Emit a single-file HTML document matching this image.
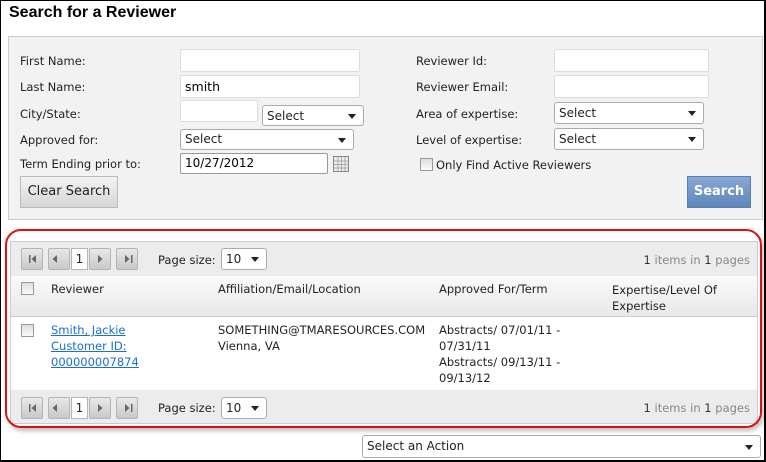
<!DOCTYPE html>
<html><head><style>
*{box-sizing:border-box;margin:0;padding:0}
body{width:766px;height:462px;background:#fff;font-family:"DejaVu Sans",Verdana,sans-serif;font-size:11.5px;color:#222;position:relative;overflow:hidden}
.a{position:absolute}
.frame{left:0;top:0;width:766px;height:462px;border:1px solid #000;border-right-width:2px;border-bottom-width:2px}
h1{position:absolute;left:9px;top:4px;font:bold 16px "Liberation Sans",Arial,sans-serif;color:#000}
.panel{left:8px;top:36px;width:755px;height:184px;background:#f2f2f2;border:1px solid #ccc}
.lbl{position:absolute;line-height:14px;white-space:nowrap}
.inp{position:absolute;background:#fff;border:1px solid #ddd;border-radius:2px;padding-left:4px;font-size:12.5px;color:#000}
.sel{position:absolute;background:#fff;border:1px solid #aaa;border-radius:3px;padding-left:4px;font-size:12px;color:#222}
.sel:after{content:"";position:absolute;right:7px;top:50%;margin-top:-2px;border-left:4px solid transparent;border-right:4px solid transparent;border-top:5px solid #222}
.btn{position:absolute;border:1px solid #bbb;background:linear-gradient(#f4f4f4,#d6d6d6);font-size:13px;text-align:center}
.pbtn{position:absolute;width:22px;height:22px;border:1px solid #b5b5b5;border-radius:2px;background:linear-gradient(#e8e8e8,#c8c8c8)}
.cb{position:absolute;width:13px;height:13px;border:1px solid #999;background:linear-gradient(#ddd,#fafafa)}
.lnk{color:#1a6ed8;text-decoration:underline}
</style></head><body>
<div class="a frame"></div>
<h1>Search for a Reviewer</h1>
<div class="a panel"></div>
<div class="lbl" style="left:20px;top:54px">First Name:</div>
<div class="lbl" style="left:20px;top:80px">Last Name:</div>
<div class="lbl" style="left:20px;top:107px">City/State:</div>
<div class="lbl" style="left:20px;top:133px">Approved for:</div>
<div class="lbl" style="left:20px;top:157px">Term Ending prior to:</div>
<div class="inp" style="left:180px;top:49px;width:180px;height:23px"></div>
<div class="inp" style="left:180px;top:75px;width:180px;height:23px;line-height:21px">smith</div>
<div class="inp" style="left:180px;top:100px;width:78px;height:22px"></div>
<div class="sel" style="left:262px;top:105px;width:102px;height:21px;line-height:20px">Select</div>
<div class="sel" style="left:180px;top:129px;width:174px;height:21px;line-height:19px">Select</div>
<div class="inp" style="left:180px;top:153px;width:148px;height:21px;line-height:19px;border-color:#999;font-size:12px">10/27/2012</div>
<svg class="a" style="left:333px;top:156px" width="16" height="16"><rect x="0.5" y="0.5" width="15" height="15" fill="#eee" stroke="#888"/><path d="M1 5H15M1 8.5H15M1 12H15M5 1V15M8.5 1V15M12 1V15" stroke="#aaa"/></svg>
<div class="btn" style="left:20px;top:176px;width:98px;height:32px;line-height:30px">Clear Search</div>
<div class="lbl" style="left:416px;top:54px">Reviewer Id:</div>
<div class="lbl" style="left:416px;top:80px">Reviewer Email:</div>
<div class="lbl" style="left:416px;top:107px">Area of expertise:</div>
<div class="lbl" style="left:416px;top:133px">Level of expertise:</div>
<div class="inp" style="left:554px;top:49px;width:155px;height:23px"></div>
<div class="inp" style="left:554px;top:75px;width:155px;height:23px"></div>
<div class="sel" style="left:554px;top:102px;width:150px;height:22px;line-height:20px">Select</div>
<div class="sel" style="left:554px;top:128px;width:150px;height:22px;line-height:20px">Select</div>
<div class="cb" style="left:420px;top:158px"></div>
<div class="lbl" style="left:436px;top:158px">Only Find Active Reviewers</div>
<div class="a" style="left:687px;top:176px;width:64px;height:32px;background:linear-gradient(#86a8d6,#5f86bb);border:1px solid #5a7fb0;color:#fff;font-weight:bold;font-size:13px;text-align:center;line-height:30px">Search</div>

<div class="a" style="left:10px;top:241px;width:748px;height:183px;border:1px solid #ccc;background:#fff"></div>
<div class="a" style="left:11px;top:242px;width:746px;height:34px;background:#ececec"></div>
<div class="a" style="left:11px;top:276px;width:746px;height:41px;background:linear-gradient(#fafafa,#e8e8e8);border-bottom:1px solid #ccc"></div>
<div class="a" style="left:11px;top:390px;width:746px;height:33px;background:#ececec"></div>

<div class="pbtn" style="left:21px;top:248px"></div><div class="pbtn" style="left:48px;top:248px"></div>
<div class="a" style="left:71px;top:248px;width:17px;height:22px;background:#fff;border:1px solid #b5b5b5;text-align:center;line-height:20px;font-size:12px">1</div>
<div class="pbtn" style="left:89px;top:248px"></div><div class="pbtn" style="left:116px;top:248px"></div>
<svg class="a" style="left:21px;top:248px" width="120" height="22"><g fill="#666"><rect x="8" y="7" width="1.5" height="8"/><path d="M15 7L10.5 11L15 15Z"/><path d="M36 7L31.5 11L36 15Z"/><path d="M77 7L81.5 11L77 15Z"/><path d="M104 7L108.5 11L104 15Z"/><rect x="110" y="7" width="1.5" height="8"/></g></svg>
<div class="lbl" style="left:158px;top:253px">Page size:</div>
<div class="sel" style="left:221px;top:248px;width:46px;height:22px;line-height:20px">10</div>
<div class="lbl" style="right:16px;top:253px;color:#888"><span style="color:#333">1</span> items in <span style="color:#333">1</span> pages</div>

<div class="cb" style="left:21px;top:282px"></div>
<div class="lbl" style="left:51px;top:282px">Reviewer</div>
<div class="lbl" style="left:218px;top:282px">Affiliation/Email/Location</div>
<div class="lbl" style="left:439px;top:282px">Approved For/Term</div>
<div class="lbl" style="left:612px;top:282px;line-height:16px">Expertise/Level Of<br>Expertise</div>

<div class="cb" style="left:21px;top:324px"></div>
<div class="lbl lnk" style="left:51px;top:322px;line-height:16px">Smith, Jackie<br>Customer ID:<br>000000007874</div>
<div class="lbl" style="left:218px;top:322px;line-height:16px">SOMETHING@TMARESOURCES.COM<br>Vienna, VA</div>
<div class="lbl" style="left:439px;top:322px;line-height:16px">Abstracts/ 07/01/11 -<br>07/31/11<br>Abstracts/ 09/13/11 -<br>09/13/12</div>

<div class="pbtn" style="left:21px;top:397px"></div><div class="pbtn" style="left:48px;top:397px"></div>
<div class="a" style="left:71px;top:397px;width:17px;height:22px;background:#fff;border:1px solid #b5b5b5;text-align:center;line-height:20px;font-size:12px">1</div>
<div class="pbtn" style="left:89px;top:397px"></div><div class="pbtn" style="left:116px;top:397px"></div>
<svg class="a" style="left:21px;top:397px" width="120" height="22"><g fill="#666"><rect x="8" y="7" width="1.5" height="8"/><path d="M15 7L10.5 11L15 15Z"/><path d="M36 7L31.5 11L36 15Z"/><path d="M77 7L81.5 11L77 15Z"/><path d="M104 7L108.5 11L104 15Z"/><rect x="110" y="7" width="1.5" height="8"/></g></svg>
<div class="lbl" style="left:158px;top:401px">Page size:</div>
<div class="sel" style="left:221px;top:397px;width:46px;height:22px;line-height:20px">10</div>
<div class="lbl" style="right:16px;top:401px;color:#888"><span style="color:#333">1</span> items in <span style="color:#333">1</span> pages</div>

<div class="a" style="left:5px;top:229px;width:757px;height:199px;border:2px solid #e01010;border-radius:16px;box-shadow:2px 3px 4px rgba(0,0,0,.25)"></div>

<div class="sel" style="left:362px;top:435px;width:399px;height:23px;line-height:21px">Select an Action</div>
</body></html>
